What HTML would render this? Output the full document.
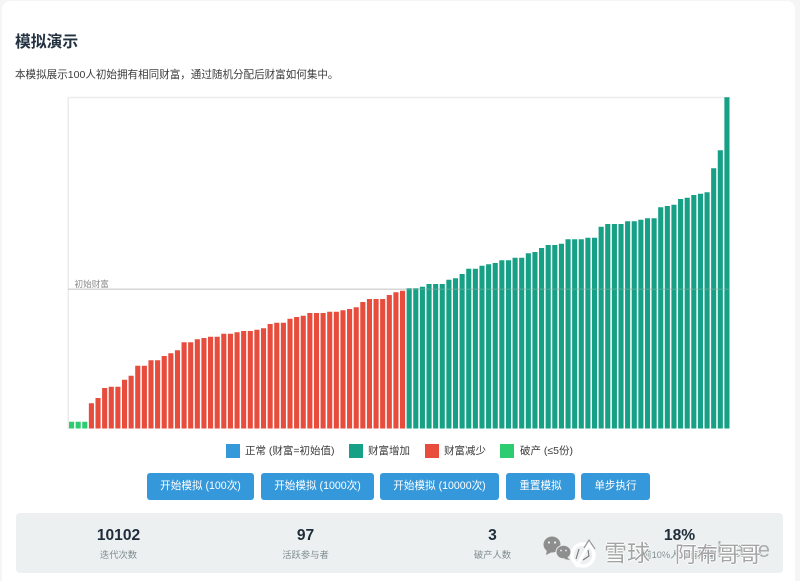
<!DOCTYPE html>
<html lang="zh"><head><meta charset="utf-8"><title>模拟演示</title>
<style>
html,body{margin:0;padding:0}
body{width:800px;height:581px;overflow:hidden;background:#f5f5f5;position:relative;font-family:"Liberation Sans","Noto Sans CJK SC",sans-serif}
#wrap{position:absolute;left:0;top:0;width:800px;height:581px;overflow:hidden;filter:blur(.3px)}
#card{position:absolute;left:2px;top:1px;width:793px;height:600px;background:#fff;border-radius:8px}
.a{position:absolute;white-space:nowrap}
h2{margin:0;position:absolute;left:15px;top:31.5px;font-size:15.8px;line-height:22px;font-weight:700;color:#22303f}
p{margin:0;position:absolute;left:15px;top:67.3px;font-size:10.55px;line-height:16px;color:#3c3c3c;white-space:nowrap}
.sq{position:absolute;top:444px;width:13.5px;height:14px}
.lg{position:absolute;top:444px;font-size:10.5px;line-height:15px;color:#3c3c3c;white-space:nowrap}
.b{position:absolute;top:473px;height:27px;background:#3498db;color:#fff;border-radius:3px;font-size:10.6px;line-height:27px;text-align:center;white-space:nowrap}
#st{position:absolute;left:16px;top:513px;width:767px;height:60px;background:#ecf0f1;border-radius:4px}
.v{position:absolute;top:527px;width:187px;text-align:center;font-size:15.6px;line-height:18px;font-weight:700;color:#1f2d3a}
.l{position:absolute;top:548px;width:187px;text-align:center;font-size:9.3px;line-height:14px;color:#7f8c8d;white-space:nowrap}
.w{position:absolute;white-space:nowrap;color:rgba(125,125,125,.7);text-shadow:1px 0 0 rgba(255,255,255,.85),-1px 0 0 rgba(255,255,255,.85),0 1px 0 rgba(255,255,255,.85),0 -1px 0 rgba(255,255,255,.85)}
</style></head>
<body>
<div id="wrap">
<div id="card"></div>
<h2>模拟演示</h2>
<p>本模拟展示100人初始拥有相同财富，通过随机分配后财富如何集中。</p>

<svg class="a" style="left:0;top:0" width="800" height="440" viewBox="0 0 800 440">
<path d="M69 97.5H730" stroke="#ececec" stroke-width="1.6" fill="none"/>
<path d="M68.2 97V429" stroke="#ececec" stroke-width="1.6" fill="none"/>
<path d="M68 289.2H730" stroke="#c8c8c8" stroke-width="1.2" fill="none"/>
<path fill="#2ecc71" d="M69 421.7h5.1v6.8h-5.1zM75.62 421.7h5.1v6.8h-5.1zM82.24 421.7h5.1v6.8h-5.1z"/>
<path fill="#e74c3c" d="M88.86 403.3h5.1V428.5h-5.1zM95.48 398h5.1V428.5h-5.1zM102.1 388h5.1V428.5h-5.1zM108.72 386.7h5.1V428.5h-5.1zM115.34 386.7h5.1V428.5h-5.1zM121.96 379.7h5.1V428.5h-5.1zM128.58 375.7h5.1V428.5h-5.1zM135.2 365.7h5.1V428.5h-5.1zM141.82 365.7h5.1V428.5h-5.1zM148.44 360.3h5.1V428.5h-5.1zM155.06 360.3h5.1V428.5h-5.1zM161.68 356h5.1V428.5h-5.1zM168.3 353.3h5.1V428.5h-5.1zM174.92 350.3h5.1V428.5h-5.1zM181.54 342.3h5.1V428.5h-5.1zM188.16 342.3h5.1V428.5h-5.1zM194.78 339.3h5.1V428.5h-5.1zM201.4 338h5.1V428.5h-5.1zM208.02 336.7h5.1V428.5h-5.1zM214.64 336.7h5.1V428.5h-5.1zM221.26 333.7h5.1V428.5h-5.1zM227.88 333.7h5.1V428.5h-5.1zM234.5 332.3h5.1V428.5h-5.1zM241.12 331h5.1V428.5h-5.1zM247.74 331h5.1V428.5h-5.1zM254.36 329.7h5.1V428.5h-5.1zM260.98 328.3h5.1V428.5h-5.1zM267.6 324h5.1V428.5h-5.1zM274.22 322.7h5.1V428.5h-5.1zM280.84 322.7h5.1V428.5h-5.1zM287.46 318.7h5.1V428.5h-5.1zM294.08 317h5.1V428.5h-5.1zM300.7 315.7h5.1V428.5h-5.1zM307.32 313h5.1V428.5h-5.1zM313.94 313h5.1V428.5h-5.1zM320.56 313h5.1V428.5h-5.1zM327.18 311.7h5.1V428.5h-5.1zM333.8 311.7h5.1V428.5h-5.1zM340.42 310.3h5.1V428.5h-5.1zM347.04 309h5.1V428.5h-5.1zM353.66 307.3h5.1V428.5h-5.1zM360.28 302h5.1V428.5h-5.1zM366.9 299h5.1V428.5h-5.1zM373.52 299h5.1V428.5h-5.1zM380.14 299h5.1V428.5h-5.1zM386.76 295h5.1V428.5h-5.1zM393.38 292.3h5.1V428.5h-5.1zM400 290.7h5.1V428.5h-5.1z"/>
<path fill="#16a085" d="M406.62 288.3h5.1V428.5h-5.1zM413.24 288.3h5.1V428.5h-5.1zM419.86 286.7h5.1V428.5h-5.1zM426.48 284h5.1V428.5h-5.1zM433.1 284h5.1V428.5h-5.1zM439.72 284h5.1V428.5h-5.1zM446.34 279.7h5.1V428.5h-5.1zM452.96 278.3h5.1V428.5h-5.1zM459.58 274h5.1V428.5h-5.1zM466.2 268.7h5.1V428.5h-5.1zM472.82 268.7h5.1V428.5h-5.1zM479.44 265.7h5.1V428.5h-5.1zM486.06 264.3h5.1V428.5h-5.1zM492.68 263h5.1V428.5h-5.1zM499.3 260.3h5.1V428.5h-5.1zM505.92 260.3h5.1V428.5h-5.1zM512.54 257.7h5.1V428.5h-5.1zM519.16 257.7h5.1V428.5h-5.1zM525.78 253.3h5.1V428.5h-5.1zM532.4 252h5.1V428.5h-5.1zM539.02 248h5.1V428.5h-5.1zM545.64 245h5.1V428.5h-5.1zM552.26 245h5.1V428.5h-5.1zM558.88 243.7h5.1V428.5h-5.1zM565.5 239.3h5.1V428.5h-5.1zM572.12 239.3h5.1V428.5h-5.1zM578.74 239.3h5.1V428.5h-5.1zM585.36 237.7h5.1V428.5h-5.1zM591.98 237.7h5.1V428.5h-5.1zM598.6 226.7h5.1V428.5h-5.1zM605.22 224h5.1V428.5h-5.1zM611.84 224h5.1V428.5h-5.1zM618.46 224h5.1V428.5h-5.1zM625.08 221.3h5.1V428.5h-5.1zM631.7 221.3h5.1V428.5h-5.1zM638.32 219.7h5.1V428.5h-5.1zM644.94 218.3h5.1V428.5h-5.1zM651.56 218.3h5.1V428.5h-5.1zM658.18 207.3h5.1V428.5h-5.1zM664.8 206h5.1V428.5h-5.1zM671.42 204.7h5.1V428.5h-5.1zM678.04 199h5.1V428.5h-5.1zM684.66 197.7h5.1V428.5h-5.1zM691.28 195h5.1V428.5h-5.1zM697.9 193.7h5.1V428.5h-5.1zM704.52 192.3h5.1V428.5h-5.1zM711.14 168.3h5.1V428.5h-5.1zM717.76 150.3h5.1V428.5h-5.1zM724.38 97.3h5.1V428.5h-5.1z"/>
<path d="M406 289.2H730" stroke="rgba(200,200,200,.3)" stroke-width="1.2" fill="none"/>
<text x="74.5" y="287" font-size="8.6" fill="#8a8a8a" font-family="'Liberation Sans','Noto Sans CJK SC',sans-serif">初始财富</text>
</svg>

<div class="sq" style="left:226px;background:#3498db"></div><div class="lg" style="left:245px">正常 (财富=初始值)</div>
<div class="sq" style="left:349px;background:#16a085"></div><div class="lg" style="left:368px">财富增加</div>
<div class="sq" style="left:425px;background:#e74c3c"></div><div class="lg" style="left:444px">财富减少</div>
<div class="sq" style="left:500px;background:#2ecc71"></div><div class="lg" style="left:520px">破产 (≤5份)</div>

<div class="b" style="left:147px;width:107px">开始模拟 (100次)</div>
<div class="b" style="left:261px;width:113px">开始模拟 (1000次)</div>
<div class="b" style="left:380px;width:119px">开始模拟 (10000次)</div>
<div class="b" style="left:506px;width:69px">重置模拟</div>
<div class="b" style="left:581px;width:69px">单步执行</div>

<div id="st"></div>
<div class="v" style="left:25px">10102</div><div class="l" style="left:25px">迭代次数</div>
<div class="v" style="left:212px">97</div><div class="l" style="left:212px">活跃参与者</div>
<div class="v" style="left:399px">3</div><div class="l" style="left:399px">破产人数</div>
<div class="v" style="left:586px">18%</div><div class="l" style="left:586px">前10%人持有财富</div>

<svg class="a" style="left:543px;top:535px" width="60" height="36" viewBox="0 0 60 36">
<ellipse cx="9" cy="9.500" rx="8.500" ry="8" fill="#8e8e8e"/>
<path d="M4 15l-1 5 6-3z" fill="#8e8e8e"/>
<ellipse cx="20.500" cy="17" rx="7.500" ry="6.800" fill="#8e8e8e" stroke="#ecf0f1" stroke-width="1"/>
<path d="M24 22l3 3-6-1z" fill="#8e8e8e"/>
<circle cx="6" cy="7.500" r="1.100" fill="#ecf0f1"/><circle cx="12" cy="7.500" r="1.100" fill="#ecf0f1"/>
<circle cx="18" cy="15.500" r=".9" fill="#ecf0f1"/><circle cx="23" cy="15.500" r=".9" fill="#ecf0f1"/>
<circle cx="40" cy="20" r="11" fill="none" stroke="#fff" stroke-width="3.500"/>
<path d="M33 32L48 6" stroke="#fff" stroke-width="3" fill="none"/>
<path d="M36 14l-3 10M45 15l1 6-6 4" stroke="#777" stroke-width="1.100" fill="none"/>
<path d="M52 14l-6-9-5 8" stroke="#999" stroke-width="1.200" fill="none"/>
</svg>
<div class="a" style="left:703px;top:535px;font-size:22px;line-height:30px;letter-spacing:3px;color:rgba(130,130,130,.6)">share</div>
<div class="w" style="left:604px;top:538px;font-size:23px;line-height:30px">雪球</div>
<div class="w" style="left:660px;top:540px;font-size:20px;line-height:30px">·</div>
<div class="w" style="left:675px;top:540px;font-size:21.500px;line-height:30px">阿布哥哥</div>
</div>
</body></html>
